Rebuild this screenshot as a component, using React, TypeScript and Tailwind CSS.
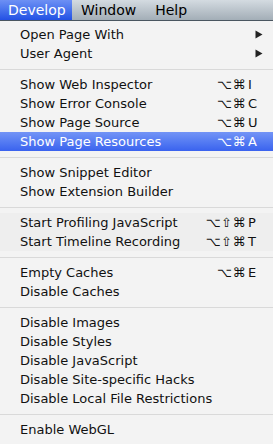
import React from 'react';

type Item =
  | { kind: 'sep' }
  | { kind: 'item'; label: string; mods?: string; keyName?: string; submenu?: boolean; active?: boolean; dim?: boolean };

const items: Item[] = [
  { kind: 'item', label: 'Open Page With', submenu: true },
  { kind: 'item', label: 'User Agent', submenu: true },
  { kind: 'sep' },
  { kind: 'item', label: 'Show Web Inspector', mods: '⌥⌘', keyName: 'I' },
  { kind: 'item', label: 'Show Error Console', mods: '⌥⌘', keyName: 'C' },
  { kind: 'item', label: 'Show Page Source', mods: '⌥⌘', keyName: 'U' },
  { kind: 'item', label: 'Show Page Resources', mods: '⌥⌘', keyName: 'A', active: true },
  { kind: 'sep' },
  { kind: 'item', label: 'Show Snippet Editor' },
  { kind: 'item', label: 'Show Extension Builder' },
  { kind: 'sep' },
  { kind: 'item', label: 'Start Profiling JavaScript', mods: '⌥⇧⌘', keyName: 'P', dim: true },
  { kind: 'item', label: 'Start Timeline Recording', mods: '⌥⇧⌘', keyName: 'T', dim: true },
  { kind: 'sep' },
  { kind: 'item', label: 'Empty Caches', mods: '⌥⌘', keyName: 'E' },
  { kind: 'item', label: 'Disable Caches' },
  { kind: 'sep' },
  { kind: 'item', label: 'Disable Images' },
  { kind: 'item', label: 'Disable Styles' },
  { kind: 'item', label: 'Disable JavaScript' },
  { kind: 'item', label: 'Disable Site-specific Hacks' },
  { kind: 'item', label: 'Disable Local File Restrictions' },
  { kind: 'sep' },
  { kind: 'item', label: 'Enable WebGL' },
];

const MenuRow: React.FC<{ item: Item }> = ({ item }) => {
  if (item.kind === 'sep') {
    return (
      <div className="h-[12px] flex items-center">
        <div className="w-full h-px bg-[#d9d9d9]" />
      </div>
    );
  }
  return (
    <div
      className={`h-[19px] flex items-center pl-[20px] pr-[12px] ${
        item.active
          ? 'bg-gradient-to-b from-[#7394f6] to-[#3a62ee] text-white'
          : item.dim
            ? 'bg-[#eeeeee] text-[#111]'
            : 'text-[#111]'
      }`}
    >
      <span className="flex-1 whitespace-nowrap">{item.label}</span>
      {item.mods && (
        <>
          <span className="text-right tracking-[0.5px] whitespace-nowrap">{item.mods}</span>
          <span className="w-[13px] ml-[2px]">{item.keyName}</span>
        </>
      )}
      {item.submenu && (
        <svg width="8" height="9" viewBox="0 0 8 9" className="mr-[-2px]">
          <path d="M0.5 0.5 L7.5 4.5 L0.5 8.5 Z" fill="#222" />
        </svg>
      )}
    </div>
  );
};

export default function App() {
  return (
    <div
      className="w-[273px] h-[444px] overflow-hidden bg-[#f3f3f3]"
      style={{ fontFamily: '"DejaVu Sans", "Liberation Sans", sans-serif' }}
    >
      {/* menu bar */}
      <div className="h-[21px] flex items-stretch bg-gradient-to-b from-[#d4dbe1] to-[#a3aeb7] border-b border-[#4a5660] text-[14px] text-black">
        <div className="w-[72px] flex items-center pl-[8px] bg-gradient-to-b from-[#6d90f4] to-[#2350e4] text-white">
          Develop
        </div>
        <div className="flex items-center pl-[9px]">Window</div>
        <div className="flex items-center pl-[19px]">Help</div>
      </div>

      <div className="pt-[4px] text-[13px] leading-[19px]">
        {items.map((it, i) => (
          <MenuRow key={i} item={it} />
        ))}
      </div>
    </div>
  );
}
